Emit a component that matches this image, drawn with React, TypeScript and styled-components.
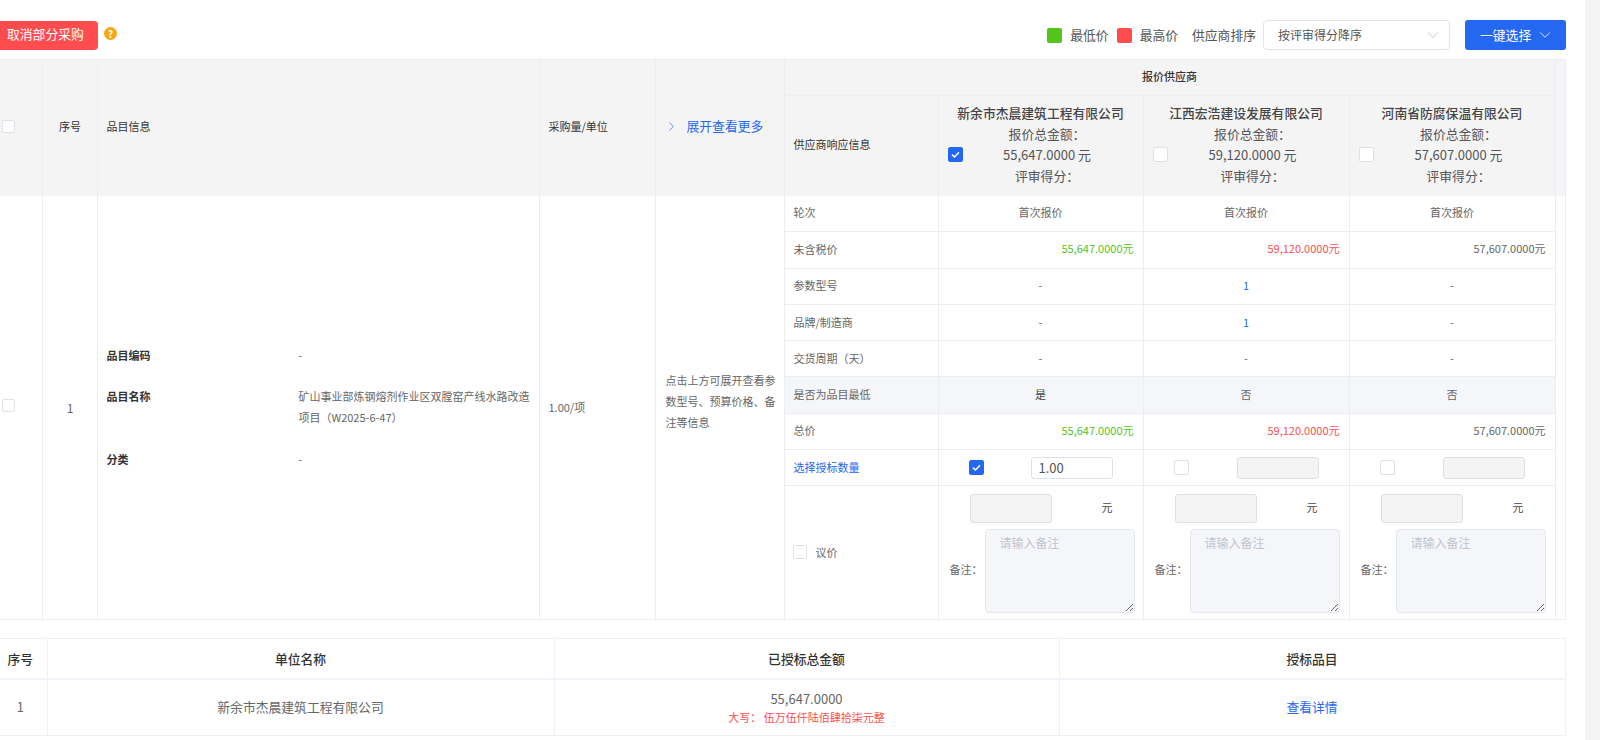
import styled, { createGlobalStyle } from "styled-components";
import { ChevronDown, ChevronRight } from "lucide-react";

const BLUE = "#2468f2";
const RED = "#ff4d4f";
const GREEN = "#52c41a";
const LINE = "#ebedf3";
const HEAD_BG = "#f4f4f5";

const suppliers = [
  { name: "新余市杰晨建筑工程有限公司", amount: "55,647.0000", checked: true },
  { name: "江西宏浩建设发展有限公司", amount: "59,120.0000", checked: false },
  { name: "河南省防腐保温有限公司", amount: "57,607.0000", checked: false },
];

const priceCells = [
  { text: "55,647.0000元", tone: "low" },
  { text: "59,120.0000元", tone: "high" },
  { text: "57,607.0000元", tone: "plain" },
];

const centerRows = [
  { label: "轮次", values: ["首次报价", "首次报价", "首次报价"] },
  { label: "未含税价", price: true },
  { label: "参数型号", values: ["-", "1", "-"], tone: "value" },
  { label: "品牌/制造商", values: ["-", "1", "-"], tone: "value" },
  { label: "交货周期（天）", values: ["-", "-", "-"] },
  { label: "是否为品目最低", values: ["是", "否", "否"], shaded: true },
  { label: "总价", price: true },
];

const columns = [42, 55, 442, 116, 129, 154, 205, 206, 206, 10];

export default function App() {
  return (
    <>
      <GlobalStyle />
      <Page>
        <Content>
          <Toolbar>
            <CancelButton>取消部分采购</CancelButton>
            <HelpDot>?</HelpDot>
            <ToolbarRight>
              <Swatch $color={GREEN} />
              <LegendText>最低价</LegendText>
              <Swatch $color={RED} />
              <LegendText>最高价</LegendText>
              <SortLabel>供应商排序</SortLabel>
              <SortSelect>
                <SelectText>按评审得分降序</SelectText>
                <ChevronDown size={20} strokeWidth={0.9} color="#b4b7be" />
              </SortSelect>
              <PickButton>
                <SelectText>一键选择</SelectText>
                <ChevronDown size={18} strokeWidth={1.1} color="#fff" />
              </PickButton>
            </ToolbarRight>
          </Toolbar>

          <QuoteTable>
            <colgroup>
              {columns.map((w, i) => (
                <Col key={i} $w={w} />
              ))}
            </colgroup>
            <thead>
              <Row $h={36}>
                <HeadCell rowSpan={2} $center>
                  <HeadCheck>
                    <Check $size={13} />
                  </HeadCheck>
                </HeadCell>
                <HeadCell rowSpan={2} $center>序号</HeadCell>
                <HeadCell rowSpan={2}>品目信息</HeadCell>
                <HeadCell rowSpan={2}>采购量/单位</HeadCell>
                <HeadCell rowSpan={2}>
                  <ExpandLink>
                    <ChevronRight size={15} strokeWidth={1.1} color={BLUE} />
                    <ExpandText>展开查看更多</ExpandText>
                  </ExpandLink>
                </HeadCell>
                <GroupCell colSpan={4}>报价供应商</GroupCell>
                <ScrollGap />
              </Row>
              <Row $h={100}>
                <HeadCell>供应商响应信息</HeadCell>
                {suppliers.map((s) => (
                  <SupplierCell key={s.name}>
                    <SupplierName>{s.name}</SupplierName>
                    <SupplierBody>
                      <Check $size={15} $checked={s.checked}>
                        {s.checked && <CheckMark />}
                      </Check>
                      <SupplierFigures>
                        <div>报价总金额：</div>
                        <AmountLine>{s.amount} 元</AmountLine>
                        <div>评审得分：</div>
                      </SupplierFigures>
                    </SupplierBody>
                  </SupplierCell>
                ))}
                <ScrollGap />
              </Row>
            </thead>
            <tbody>
              {centerRows.map((r, i) => (
                <Row key={r.label} $h={36.3}>
                  {i === 0 && (
                    <>
                      <ItemCell rowSpan={9}>
                        <Check $size={13} />
                      </ItemCell>
                      <IndexCell rowSpan={9}>1</IndexCell>
                      <ItemCell rowSpan={9}>
                        <InfoList>
                          <InfoRow>
                            <InfoLabel>品目编码</InfoLabel>
                            <InfoValue>-</InfoValue>
                          </InfoRow>
                          <InfoRow>
                            <InfoLabel>品目名称</InfoLabel>
                            <InfoValue>矿山事业部炼钢熔剂作业区双膛窑产线水路改造项目（W2025-6-47）</InfoValue>
                          </InfoRow>
                          <InfoRow>
                            <InfoLabel>分类</InfoLabel>
                            <InfoValue>-</InfoValue>
                          </InfoRow>
                        </InfoList>
                      </ItemCell>
                      <ItemCell rowSpan={9}>1.00/项</ItemCell>
                      <TipCell rowSpan={9}>
                        <ExpandTip>点击上方可展开查看参数型号、预算价格、备注等信息</ExpandTip>
                      </TipCell>
                    </>
                  )}
                  <LabelCell $shaded={r.shaded}>{r.label}</LabelCell>
                  {r.price
                    ? priceCells.map((c) => (
                        <PriceCell key={c.text} $tone={c.tone}>{c.text}</PriceCell>
                      ))
                    : r.values!.map((v, j) => (
                        <ValueCell key={j} $shaded={r.shaded} $tone={v === "1" ? "link" : r.shaded && v === "是" ? "dark" : "plain"}>
                          {v}
                        </ValueCell>
                      ))}
                  {i === 0 && <ScrollBody rowSpan={9} />}
                </Row>
              ))}
              <Row $h={36.3}>
                <LabelCell $link>选择授标数量</LabelCell>
                {suppliers.map((s) => (
                  <AwardCell key={s.name}>
                    <AwardRow>
                      <Check $size={15} $checked={s.checked}>
                        {s.checked && <CheckMark />}
                      </Check>
                      <QtyInput disabled={!s.checked} defaultValue={s.checked ? "1.00" : ""} />
                    </AwardRow>
                  </AwardCell>
                ))}
              </Row>
              <Row $h={134}>
                <LabelCell>
                  <BargainLabel>
                    <Check $size={14} />
                    议价
                  </BargainLabel>
                </LabelCell>
                {suppliers.map((s) => (
                  <BargainCell key={s.name}>
                    <PriceLine>
                      <BargainInput disabled />
                      <Unit>元</Unit>
                    </PriceLine>
                    <RemarkLine>
                      <RemarkLabel>备注：</RemarkLabel>
                      <RemarkBox disabled placeholder="请输入备注" />
                    </RemarkLine>
                  </BargainCell>
                ))}
              </Row>
            </tbody>
          </QuoteTable>

          <AwardTable>
            <colgroup>
              <Col $w={47} />
              <Col $w={507} />
              <Col $w={505} />
              <Col $w={506} />
            </colgroup>
            <thead>
              <Row $h={40}>
                <AwardHead>序号</AwardHead>
                <AwardHead>单位名称</AwardHead>
                <AwardHead>已授标总金额</AwardHead>
                <AwardHead>授标品目</AwardHead>
              </Row>
            </thead>
            <tbody>
              <Row $h={57}>
                <AwardData>1</AwardData>
                <AwardData>新余市杰晨建筑工程有限公司</AwardData>
                <AwardData>
                  <AmountLine>55,647.0000</AmountLine>
                  <UpperAmount>大写： 伍万伍仟陆佰肆拾柒元整</UpperAmount>
                </AwardData>
                <AwardData>
                  <DetailLink>查看详情</DetailLink>
                </AwardData>
              </Row>
            </tbody>
          </AwardTable>
        </Content>
      </Page>
    </>
  );
}

function CheckMark() {
  return (
    <svg width="11" height="11" viewBox="0 0 11 11" fill="none">
      <path d="M2 5.6 4.5 8 9 3.2" stroke="#fff" strokeWidth="1.5" />
    </svg>
  );
}

const GlobalStyle = createGlobalStyle`
  html, body {
    margin: 0;
    height: 100%;
    overflow: hidden;
    background: ${HEAD_BG};
    font-family: "Noto Sans CJK SC", "Noto Sans", sans-serif;
    color: #606266;
  }
`;

const Page = styled.div`
  width: 1585px;
  height: 740px;
  background: #fff;
  overflow: hidden;
`;

const Content = styled.div`
  width: 1565px;
`;

const Toolbar = styled.div`
  display: flex;
  align-items: center;
  height: 59px;
  margin-right: -1px;
  padding-top: 20px;
  padding-bottom: 9px;
  box-sizing: border-box;
`;

const CancelButton = styled.button`
  width: 98px;
  height: 29px;
  padding: 0 0 4px 7px;
  border: 0;
  border-radius: 0 4px 4px 0;
  background: ${RED};
  color: #fff;
  font: inherit;
  font-size: 12.8px;
  text-align: left;
`;

const HelpDot = styled.span`
  display: flex;
  align-items: center;
  justify-content: center;
  width: 13px;
  height: 13px;
  margin: 0 0 3px 6px;
  border-radius: 50%;
  background: #faa613;
  color: #fff;
  font-size: 10px;
  font-weight: 700;
  line-height: 1;
`;

const ToolbarRight = styled.div`
  display: flex;
  align-items: center;
  margin-left: auto;
  font-size: 12.8px;
  color: #555;
`;

const Swatch = styled.span<{ $color: string }>`
  width: 15px;
  height: 15px;
  border-radius: 2px;
  background: ${(p) => p.$color};
`;

const LegendText = styled.span`
  margin: 0 8px 2px 8px;
`;

const SortLabel = styled.span`
  margin: 0 7px 2px 6px;
`;

const SelectText = styled.span`
  margin-bottom: 2px;
`;

const SortSelect = styled.div`
  display: flex;
  align-items: center;
  justify-content: space-between;
  width: 187px;
  height: 30px;
  padding: 0 6px 0 14px;
  box-sizing: border-box;
  border: 1px solid #e2e4ea;
  border-radius: 4px;
  font-size: 12px;
  color: #555;
`;

const PickButton = styled.button`
  display: flex;
  align-items: center;
  gap: 5px;
  width: 101px;
  height: 30px;
  margin-left: 15px;
  padding: 0 0 0 15px;
  border: 0;
  border-radius: 3px;
  background: ${BLUE};
  color: #fff;
  font: inherit;
  font-size: 12.8px;
`;

const Col = styled.col<{ $w: number }>`
  width: ${(p) => p.$w}px;
`;

const Row = styled.tr<{ $h: number }>`
  height: ${(p) => p.$h}px;
`;

const QuoteTable = styled.table`
  width: 1565px;
  table-layout: fixed;
  border-collapse: collapse;
  font-size: 11px;
  border-top: 1px solid ${LINE};
`;

const HeadCell = styled.th<{ $center?: boolean }>`
  padding: ${(p) => (p.$center ? "0 9px 3px 10px" : "0 10px 3px 9px")};
  background: ${HEAD_BG};
  border-right: 1px solid ${LINE};
  color: #333;
  font-weight: 400;
  text-align: ${(p) => (p.$center ? "center" : "left")};
`;

const HeadCheck = styled.div`
  display: flex;
  margin-left: -8px;
`;

const GroupCell = styled.th`
  padding: 0 0 3px;
  background: ${HEAD_BG};
  border-bottom: 1px solid #eeeff3;
  color: #333;
  font-weight: 500;
  text-align: center;
`;

const ScrollGap = styled.th`
  padding: 0;
  background: #f3f5f9;
  border-left: 1px solid ${LINE};
  border-right: 1px solid ${LINE};
`;

const ScrollBody = styled.td`
  padding: 0;
  border: 1px solid ${LINE};
  border-top: 0;
`;

const ExpandLink = styled.div`
  display: flex;
  align-items: center;
  gap: 8px;
  margin-left: -1px;
  color: ${BLUE};
  font-size: 12.8px;
`;

const ExpandText = styled.span`
  margin-bottom: 2px;
`;

const SupplierCell = styled.th`
  padding: 0 11px 3px 9px;
  background: ${HEAD_BG};
  border-left: 1px solid ${LINE};
  color: #555;
  font-size: 12.8px;
  font-weight: 400;
  line-height: 21px;
  text-align: center;
`;

const SupplierName = styled.div`
  padding-left: 2px;
  color: #444;
  font-weight: 500;
`;

const SupplierBody = styled.div`
  display: flex;
  align-items: center;
`;

const SupplierFigures = styled.div`
  flex: 1;
  text-align: center;
`;

const AmountLine = styled.div`
  font-size: 13px;
`;

const Check = styled.span<{ $size: number; $checked?: boolean }>`
  display: inline-flex;
  flex: none;
  align-items: center;
  justify-content: center;
  width: ${(p) => p.$size}px;
  height: ${(p) => p.$size}px;
  box-sizing: border-box;
  border: 1px solid ${(p) => (p.$checked ? BLUE : "#dfe1e6")};
  border-radius: 2px;
  background: ${(p) => (p.$checked ? BLUE : "#fff")};
`;

const ItemCell = styled.td`
  padding: 0 0 0 9px;
  border-right: 1px solid ${LINE};
  border-bottom: 1px solid ${LINE};
  color: #666;

  &:first-child {
    padding: 0 0 0 2px;
  }
`;

const IndexCell = styled(ItemCell)`
  padding: 0 0 0 1px;
  font-size: 12px;
  text-align: center;
`;

const TipCell = styled(ItemCell)`
  padding: 0 0 0 10px;
`;

const InfoList = styled.div`
  display: flex;
  flex-direction: column;
  gap: 20.5px;
  line-height: 21px;
`;

const InfoRow = styled.div`
  display: flex;
`;

const InfoLabel = styled.div`
  flex: none;
  width: 192px;
  color: #333;
  font-weight: 700;
`;

const InfoValue = styled.div`
  flex: none;
  width: 232px;
`;

const ExpandTip = styled.div`
  margin-bottom: 12px;
  line-height: 21px;
`;

const LabelCell = styled.td<{ $shaded?: boolean; $link?: boolean }>`
  padding: 0 10px 2px 9px;
  border-bottom: 1px solid ${LINE};
  background: ${(p) => (p.$shaded ? "#f5f6fa" : "#fff")};
  color: ${(p) => (p.$link ? BLUE : "#666")};
`;

const toneColor: Record<string, string> = {
  low: GREEN,
  high: RED,
  plain: "#666",
  link: BLUE,
  dark: "#444",
};

const ValueCell = styled.td<{ $shaded?: boolean; $tone: string }>`
  padding: 0 10px 2px;
  border-left: 1px solid ${LINE};
  border-bottom: 1px solid ${LINE};
  background: ${(p) => (p.$shaded ? "#f5f6fa" : "#fff")};
  color: ${(p) => toneColor[p.$tone]};
  text-align: center;
`;

const PriceCell = styled.td<{ $tone: string }>`
  padding: 0 9px 3px;
  border-left: 1px solid ${LINE};
  border-bottom: 1px solid ${LINE};
  color: ${(p) => toneColor[p.$tone]};
  text-align: right;
`;

const AwardCell = styled.td`
  padding: 0 30px;
  border-left: 1px solid ${LINE};
  border-bottom: 1px solid ${LINE};
`;

const AwardRow = styled.div`
  display: flex;
  align-items: center;
  justify-content: space-between;
`;

const QtyInput = styled.input`
  width: 82px;
  height: 22px;
  padding: 0 7px;
  box-sizing: border-box;
  border: 1px solid #dcdfe6;
  border-radius: 3px;
  background: #fff;
  color: #555;
  font: inherit;
  font-size: 13px;

  &:disabled {
    background: ${HEAD_BG};
  }
`;

const BargainLabel = styled.div`
  display: flex;
  align-items: center;
  gap: 9px;
  margin-left: -1px;
`;

const BargainCell = styled.td`
  padding: 1px 10px 0 11px;
  border-left: 1px solid ${LINE};
  border-bottom: 1px solid ${LINE};
`;

const PriceLine = styled.div`
  display: flex;
  align-items: center;
  padding-left: 20px;
`;

const BargainInput = styled.input`
  width: 82px;
  height: 29px;
  box-sizing: border-box;
  border: 1px solid #dcdfe6;
  border-radius: 3px;
  background: ${HEAD_BG};
`;

const Unit = styled.span`
  margin: 0 0 2px 50px;
  color: #444;
`;

const RemarkLine = styled.div`
  display: flex;
  align-items: center;
  margin-top: 6px;
`;

const RemarkLabel = styled.span`
  flex: none;
  width: 35px;
  margin-bottom: 3px;
  color: #666;
`;

const RemarkBox = styled.textarea`
  display: block;
  flex: none;
  width: 150px;
  height: 84px;
  padding: 3px 14px;
  box-sizing: border-box;
  border: 1px solid #e4e7ed;
  border-radius: 4px;
  background: #f5f6fa;
  font: inherit;
  font-size: 12px;
  line-height: 20px;

  &::placeholder {
    color: #c0c4cc;
  }
`;

const AwardTable = styled.table`
  width: 1565px;
  margin-top: 18px;
  table-layout: fixed;
  border-collapse: collapse;
  font-size: 12.8px;
  border: 1px solid #eef0f6;
  border-left: 0;
`;

const AwardHead = styled.th`
  padding: 0 0 1px;
  border-right: 1px solid #eef0f6;
  border-bottom: 2px solid #f1f3f8;
  color: #333;
  font-weight: 500;
  text-align: center;

  &:first-child {
    padding-right: 6px;
  }
`;

const AwardData = styled.td`
  padding: 0 0 3px;
  border-right: 1px solid #eef0f6;
  color: #666;
  text-align: center;
  line-height: 19px;

  &:first-child {
    padding-right: 6px;
  }
`;

const UpperAmount = styled.div`
  margin-bottom: -3px;
  color: ${RED};
  font-size: 11px;
`;

const DetailLink = styled.span`
  color: ${BLUE};
`;
